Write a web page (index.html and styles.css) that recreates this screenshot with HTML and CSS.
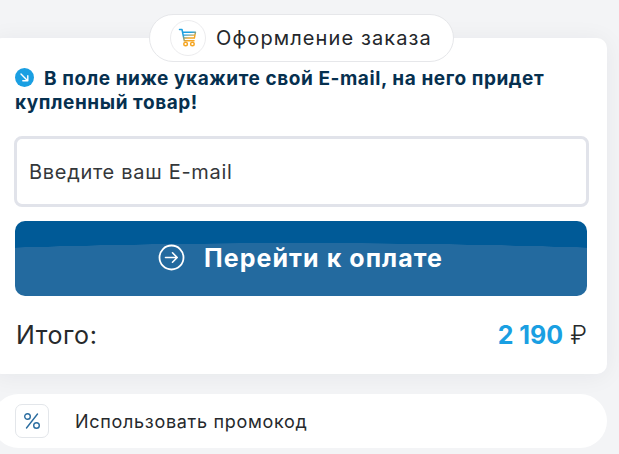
FILE: index.html
```html
<!DOCTYPE html>
<html lang="ru">
<head>
<meta charset="utf-8">
<title>Оформление заказа</title>
<link rel="stylesheet" href="styles.css">
</head>
<body>
<main class="page">
  <div class="badge">
    <span class="badge-icon">
      <svg width="20" height="20" viewBox="0 0 20 20" fill="none">
        <defs><linearGradient id="cart" x1="0" y1="0" x2="1" y2="1"><stop offset="0.35" stop-color="#1b9fe0"/><stop offset="0.75" stop-color="#f5a623"/></linearGradient></defs>
        <path d="M1.5 1.5H4L6.3 12.8H16" stroke="url(#cart)" stroke-width="1.5" stroke-linecap="round" stroke-linejoin="round"/>
        <path d="M4.6 4.2H17.5L16.4 10H5.8M5.2 7.1H17" stroke="url(#cart)" stroke-width="1.4" stroke-linejoin="round"/>
        <circle cx="7.6" cy="16" r="1.8" stroke="#f5a623" stroke-width="1.4"/>
        <circle cx="14.4" cy="16" r="1.8" stroke="#f5a623" stroke-width="1.4"/>
      </svg>
    </span>
    <span class="badge-text">Оформление заказа</span>
  </div>
  <section class="card">
    <p class="notice">
      <svg class="notice-icon" width="19" height="19" viewBox="0 0 19 19" fill="none">
        <circle cx="9.5" cy="9.5" r="9.5" fill="#1a9fe2"/>
        <path d="M6 6L12.4 12.4M12.8 7.8V12.8H7.8" stroke="#fff" stroke-width="1.4" stroke-linecap="round" stroke-linejoin="round"/>
      </svg>В поле ниже укажите свой E-mail, на него придет купленный товар!
    </p>
    <div class="field">Введите ваш E-mail</div>
    <button class="pay" type="button">
      <svg width="27" height="27" viewBox="0 0 27 27" fill="none">
        <circle cx="13.5" cy="13.5" r="12" stroke="#fff" stroke-width="1.8"/>
        <path d="M7.5 13.5H19M14.5 8.8L19.2 13.5L14.5 18.2" stroke="#fff" stroke-width="1.6" stroke-linecap="round" stroke-linejoin="round"/>
      </svg>
      <span>Перейти к оплате</span>
    </button>
    <div class="total">
      <span class="total-label">Итого:</span>
      <span class="total-sum"><b>2 190</b> <span class="rub">₽</span></span>
    </div>
  </section>
  <div class="promo">
    <span class="promo-icon">
      <svg width="18" height="18" viewBox="0 0 18 18" fill="none">
        <circle cx="4.5" cy="4.5" r="2.8" stroke="#2a6c9f" stroke-width="1.4"/>
        <circle cx="13.5" cy="13.5" r="2.8" stroke="#2a6c9f" stroke-width="1.4"/>
        <path d="M14.5 2L3.5 16" stroke="#2a6c9f" stroke-width="1.4" stroke-linecap="round"/>
      </svg>
    </span>
    <span class="promo-text">Использовать промокод</span>
  </div>
</main>
</body>
</html>
```
FILE: styles.css
```css
* { box-sizing: border-box; }
html, body { margin: 0; height: 100%; }
body {
  background: #f3f4f6;
  font-family: "Inter", "Open Sans", sans-serif;
  color: #222;
  overflow: hidden;
}
.page {
  width: 619px;
  padding: 14px 12px 0 0;
  display: flex;
  flex-direction: column;
}
.badge {
  align-self: flex-start;
  margin: 0 0 -24px 149px;
  width: 305px;
  height: 48px;
  background: #fff;
  border: 1px solid #e6e7ea;
  border-radius: 24px;
  display: flex;
  align-items: center;
  padding-left: 20px;
  gap: 10px;
  position: relative;
  z-index: 1;
}
.badge-icon {
  width: 36px;
  height: 36px;
  border: 1px solid #ececee;
  border-radius: 50%;
  display: flex;
  align-items: center;
  justify-content: center;
}
.badge-text { font-size: 20px; letter-spacing: 1.1px; color: #24272b; }
.card {
  margin-left: -8px;
  height: 336px;
  background: #fff;
  border-radius: 10px;
  padding: 29px 20px 0 23px;
  box-shadow: 0 2px 24px rgba(20, 30, 50, 0.06);
}
.notice {
  margin: 0 -4px 21px 0;
  height: 48px;
  font-size: 19px;
  line-height: 24px;
  font-weight: 700;
  color: #06304f;
  letter-spacing: 0.57px;
}
.notice-icon { vertical-align: -2px; margin-right: 10px; }
.field {
  margin: 0 -2px 0 -1px;
  height: 71px;
  border: 3px solid #e1e3ea;
  border-radius: 8px;
  display: flex;
  align-items: center;
  padding-left: 12px;
  font-size: 20px;
  letter-spacing: 0.7px;
  color: #34373a;
}
.pay {
  margin-top: 14px;
  width: 100%;
  height: 75px;
  border: 0;
  border-radius: 10px;
  background: radial-gradient(964px 100px at 50% 122px, #236a9f 99.7%, #005a97 100%);
  color: #fff;
  display: flex;
  align-items: flex-start;
  justify-content: center;
  gap: 19px;
  padding: 24px 0 0 0;
  font: 700 25px/27px "Inter", "Open Sans", sans-serif;
  letter-spacing: 1.05px;
}
.pay svg { margin-top: -1px; margin-left: -1px; }
.total {
  display: flex;
  justify-content: space-between;
  align-items: center;
  margin-top: 24px;
  padding: 0 0 0 1px;
  height: 30px;
}
.total-label { font-size: 25px; letter-spacing: 0.55px; color: #26292c; }
.total-sum { font-size: 25px; color: #26292c; }
.total-sum b { color: #1a9fe2; font-weight: 700; letter-spacing: 0; }
.rub { font-weight: 300; }
.promo {
  margin: 20px 0 0 -8px;
  height: 54px;
  background: #fff;
  border-radius: 27px;
  display: flex;
  align-items: center;
  padding-left: 23px;
  gap: 26px;
}
.promo-icon {
  width: 34px;
  height: 34px;
  border: 1px solid #e3e6ea;
  border-radius: 7px;
  display: flex;
  align-items: center;
  justify-content: center;
}
.promo-text { font-size: 18px; letter-spacing: 0.7px; color: #26292c; }
```
